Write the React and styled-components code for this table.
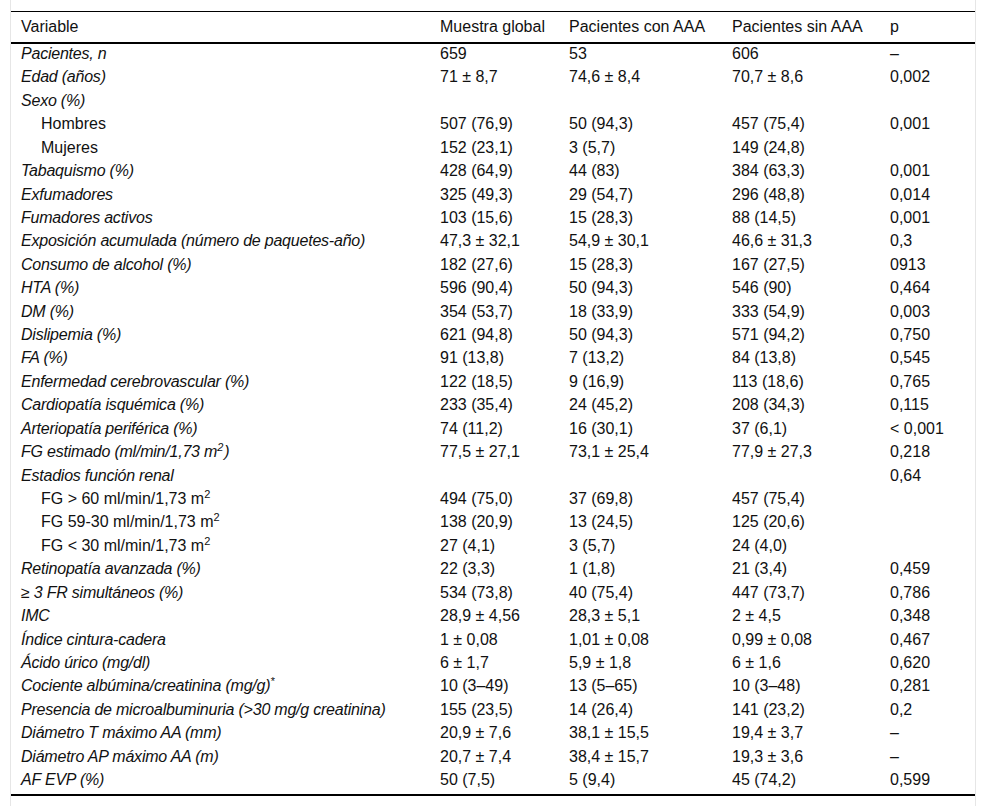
import React from "react";
import styled, { createGlobalStyle } from "styled-components";

const Global = createGlobalStyle`
  html, body { margin: 0; padding: 0; background: #fff; }
  body { font-family: "Liberation Sans", Arial, sans-serif; color: #111; }
`;

const Frame = styled.div`
  margin-left: 10px;
  width: 966px;
  min-height: 806px;
  box-sizing: border-box;
  border-left: 1px solid #e6e6e6;
  border-right: 1px solid #e6e6e6;
  padding-top: 11px;
`;

const Table = styled.table`
  width: 964px;
  border-collapse: collapse;
  table-layout: fixed;
  font-size: 16px;
  border-top: 1px solid #000;
  border-bottom: 2px solid #000;
`;

const HeadCell = styled.th`
  text-align: left;
  font-weight: normal;
  padding: 6px 10px 6px 10px;
  line-height: 18px;
  border-bottom: 2px solid #000;
  white-space: nowrap;
`;

const Cell = styled.td`
  padding: 1px 10px 4px 10px;
  line-height: 18.42px;
  vertical-align: top;
  white-space: nowrap;
  font-style: ${(p) => (p.$italic ? "italic" : "normal")};
  letter-spacing: ${(p) => (p.$italic ? "-0.22px" : "normal")};
  padding-left: ${(p) => (p.$indent ? "30px" : "10px")};
`;

const Sup = styled.sup`
  font-size: 11px;
  line-height: 0;
  vertical-align: 6px;
  letter-spacing: 0;
`;

const m2 = (
  <>
    m<Sup>2</Sup>
  </>
);

const rows = [
  ["Pacientes, n", "659", "53", "606", "–"],
  ["Edad (años)", "71 ± 8,7", "74,6 ± 8,4", "70,7 ± 8,6", "0,002"],
  ["Sexo (%)", "", "", "", ""],
  ["Hombres", "507 (76,9)", "50 (94,3)", "457 (75,4)", "0,001", "indent"],
  ["Mujeres", "152 (23,1)", "3 (5,7)", "149 (24,8)", "", "indent"],
  ["Tabaquismo (%)", "428 (64,9)", "44 (83)", "384 (63,3)", "0,001"],
  ["Exfumadores", "325 (49,3)", "29 (54,7)", "296 (48,8)", "0,014"],
  ["Fumadores activos", "103 (15,6)", "15 (28,3)", "88 (14,5)", "0,001"],
  ["Exposición acumulada (número de paquetes-año)", "47,3 ± 32,1", "54,9 ± 30,1", "46,6 ± 31,3", "0,3"],
  ["Consumo de alcohol (%)", "182 (27,6)", "15 (28,3)", "167 (27,5)", "0913"],
  ["HTA (%)", "596 (90,4)", "50 (94,3)", "546 (90)", "0,464"],
  ["DM (%)", "354 (53,7)", "18 (33,9)", "333 (54,9)", "0,003"],
  ["Dislipemia (%)", "621 (94,8)", "50 (94,3)", "571 (94,2)", "0,750"],
  ["FA (%)", "91 (13,8)", "7 (13,2)", "84 (13,8)", "0,545"],
  ["Enfermedad cerebrovascular (%)", "122 (18,5)", "9 (16,9)", "113 (18,6)", "0,765"],
  ["Cardiopatía isquémica (%)", "233 (35,4)", "24 (45,2)", "208 (34,3)", "0,115"],
  ["Arteriopatía periférica (%)", "74 (11,2)", "16 (30,1)", "37 (6,1)", "< 0,001"],
  [<>FG estimado (ml/min/1,73 {m2}&#8202;)</>, "77,5 ± 27,1", "73,1 ± 25,4", "77,9 ± 27,3", "0,218"],
  ["Estadios función renal", "", "", "", "0,64"],
  [<>FG &gt; 60 ml/min/1,73 {m2}</>, "494 (75,0)", "37 (69,8)", "457 (75,4)", "", "indent"],
  [<>FG 59-30 ml/min/1,73 {m2}</>, "138 (20,9)", "13 (24,5)", "125 (20,6)", "", "indent"],
  [<>FG &lt; 30 ml/min/1,73 {m2}</>, "27 (4,1)", "3 (5,7)", "24 (4,0)", "", "indent"],
  ["Retinopatía avanzada (%)", "22 (3,3)", "1 (1,8)", "21 (3,4)", "0,459"],
  ["≥ 3 FR simultáneos (%)", "534 (73,8)", "40 (75,4)", "447 (73,7)", "0,786"],
  ["IMC", "28,9 ± 4,56", "28,3 ± 5,1", "2 ± 4,5", "0,348"],
  ["Índice cintura-cadera", "1 ± 0,08", "1,01 ± 0,08", "0,99 ± 0,08", "0,467"],
  ["Ácido úrico (mg/dl)", "6 ± 1,7", "5,9 ± 1,8", "6 ± 1,6", "0,620"],
  [<>Cociente albúmina/creatinina (mg/g)<Sup>*</Sup></>, "10 (3–49)", "13 (5–65)", "10 (3–48)", "0,281"],
  ["Presencia de microalbuminuria (>30 mg/g creatinina)", "155 (23,5)", "14 (26,4)", "141 (23,2)", "0,2"],
  ["Diámetro T máximo AA (mm)", "20,9 ± 7,6", "38,1 ± 15,5", "19,4 ± 3,7", "–"],
  ["Diámetro AP máximo AA (m)", "20,7 ± 7,4", "38,4 ± 15,7", "19,3 ± 3,6", "–"],
  ["AF EVP (%)", "50 (7,5)", "5 (9,4)", "45 (74,2)", "0,599"],
];

export default function App() {
  return (
    <>
      <Global />
      <Frame>
        <Table>
          <colgroup>
            <col style={{ width: 419 }} />
            <col style={{ width: 129 }} />
            <col style={{ width: 163 }} />
            <col style={{ width: 158 }} />
            <col style={{ width: 95 }} />
          </colgroup>
          <thead>
            <tr>
              <HeadCell>Variable</HeadCell>
              <HeadCell>Muestra global</HeadCell>
              <HeadCell>Pacientes con AAA</HeadCell>
              <HeadCell>Pacientes sin AAA</HeadCell>
              <HeadCell>p</HeadCell>
            </tr>
          </thead>
          <tbody>
            {rows.map((r, i) => {
              const indent = r[5] === "indent";
              return (
                <tr key={i}>
                  <Cell $italic={!indent} $indent={indent}>{r[0]}</Cell>
                  <Cell>{r[1]}</Cell>
                  <Cell>{r[2]}</Cell>
                  <Cell>{r[3]}</Cell>
                  <Cell>{r[4]}</Cell>
                </tr>
              );
            })}
          </tbody>
        </Table>
      </Frame>
    </>
  );
}
